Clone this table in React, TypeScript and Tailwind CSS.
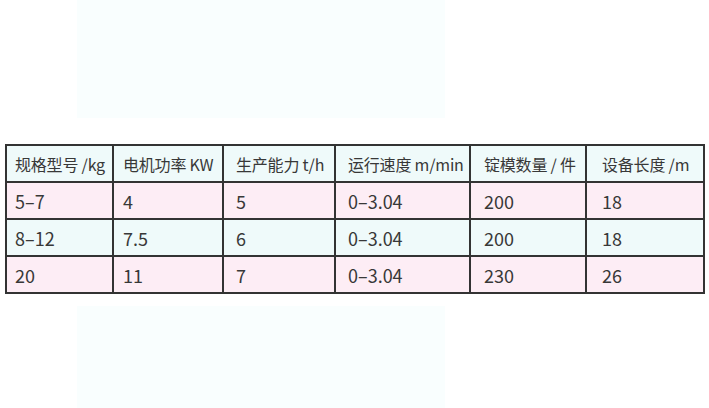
const HEAD = ['规格型号 /kg', '电机功率 KW', '生产能力 t/h', '运行速度 m/min', '锭模数量 / 件', '设备长度 /m'];

const ROWS = [
  ['5–7', '4', '5', '0–3.04', '200', '18'],
  ['8–12', '7.5', '6', '0–3.04', '200', '18'],
  ['20', '11', '7', '0–3.04', '230', '26'],
];

// column widths and left padding, measured off the picture
const COLS = [
  'w-[107px] pl-[8px]',
  'w-[110px] pl-[9px]',
  'w-[112px] pl-[12px]',
  'w-[135px] pl-[12px]',
  'w-[116px] pl-[13px]',
  'w-[118px] pl-[15px]',
];

export default function App() {
  return (
    <div
      className="w-[709px] h-[408px] bg-white overflow-hidden text-[#383838]"
      style={{ fontFamily: '"Noto Sans CJK SC", "Noto Sans", sans-serif' }}
    >
      {/* faint backdrop above the table */}
      <div className="ml-[77px] w-[368px] h-[118px] bg-[#f9fefe]" />

      <div className="pl-[5px] pt-[26px]">
        <table className="w-[698px] border-collapse border-2 border-[#333] table-fixed">
          <thead>
            <tr className="bg-[#effafa] h-[37px]">
              {HEAD.map((h, i) => (
                <th
                  key={h}
                  className={`${COLS[i]} border-2 border-[#333] text-left font-normal text-[16px] leading-none whitespace-nowrap tracking-[-0.2px]`}
                >
                  {h}
                </th>
              ))}
            </tr>
          </thead>
          <tbody>
            {ROWS.map((r, ri) => (
              <tr key={ri} className={ri % 2 === 0 ? 'bg-[#fdedf5] h-[37px]' : 'bg-[#effafa] h-[37px]'}>
                {r.map((c, ci) => (
                  <td key={ci} className={`${COLS[ci]} border-2 border-[#333] text-[18px] leading-none`}>
                    {c}
                  </td>
                ))}
              </tr>
            ))}
          </tbody>
        </table>
      </div>

      {/* faint backdrop below the table */}
      <div className="ml-[77px] mt-[12px] w-[368px] h-[110px] bg-[#f9fefe]" />
    </div>
  );
}
